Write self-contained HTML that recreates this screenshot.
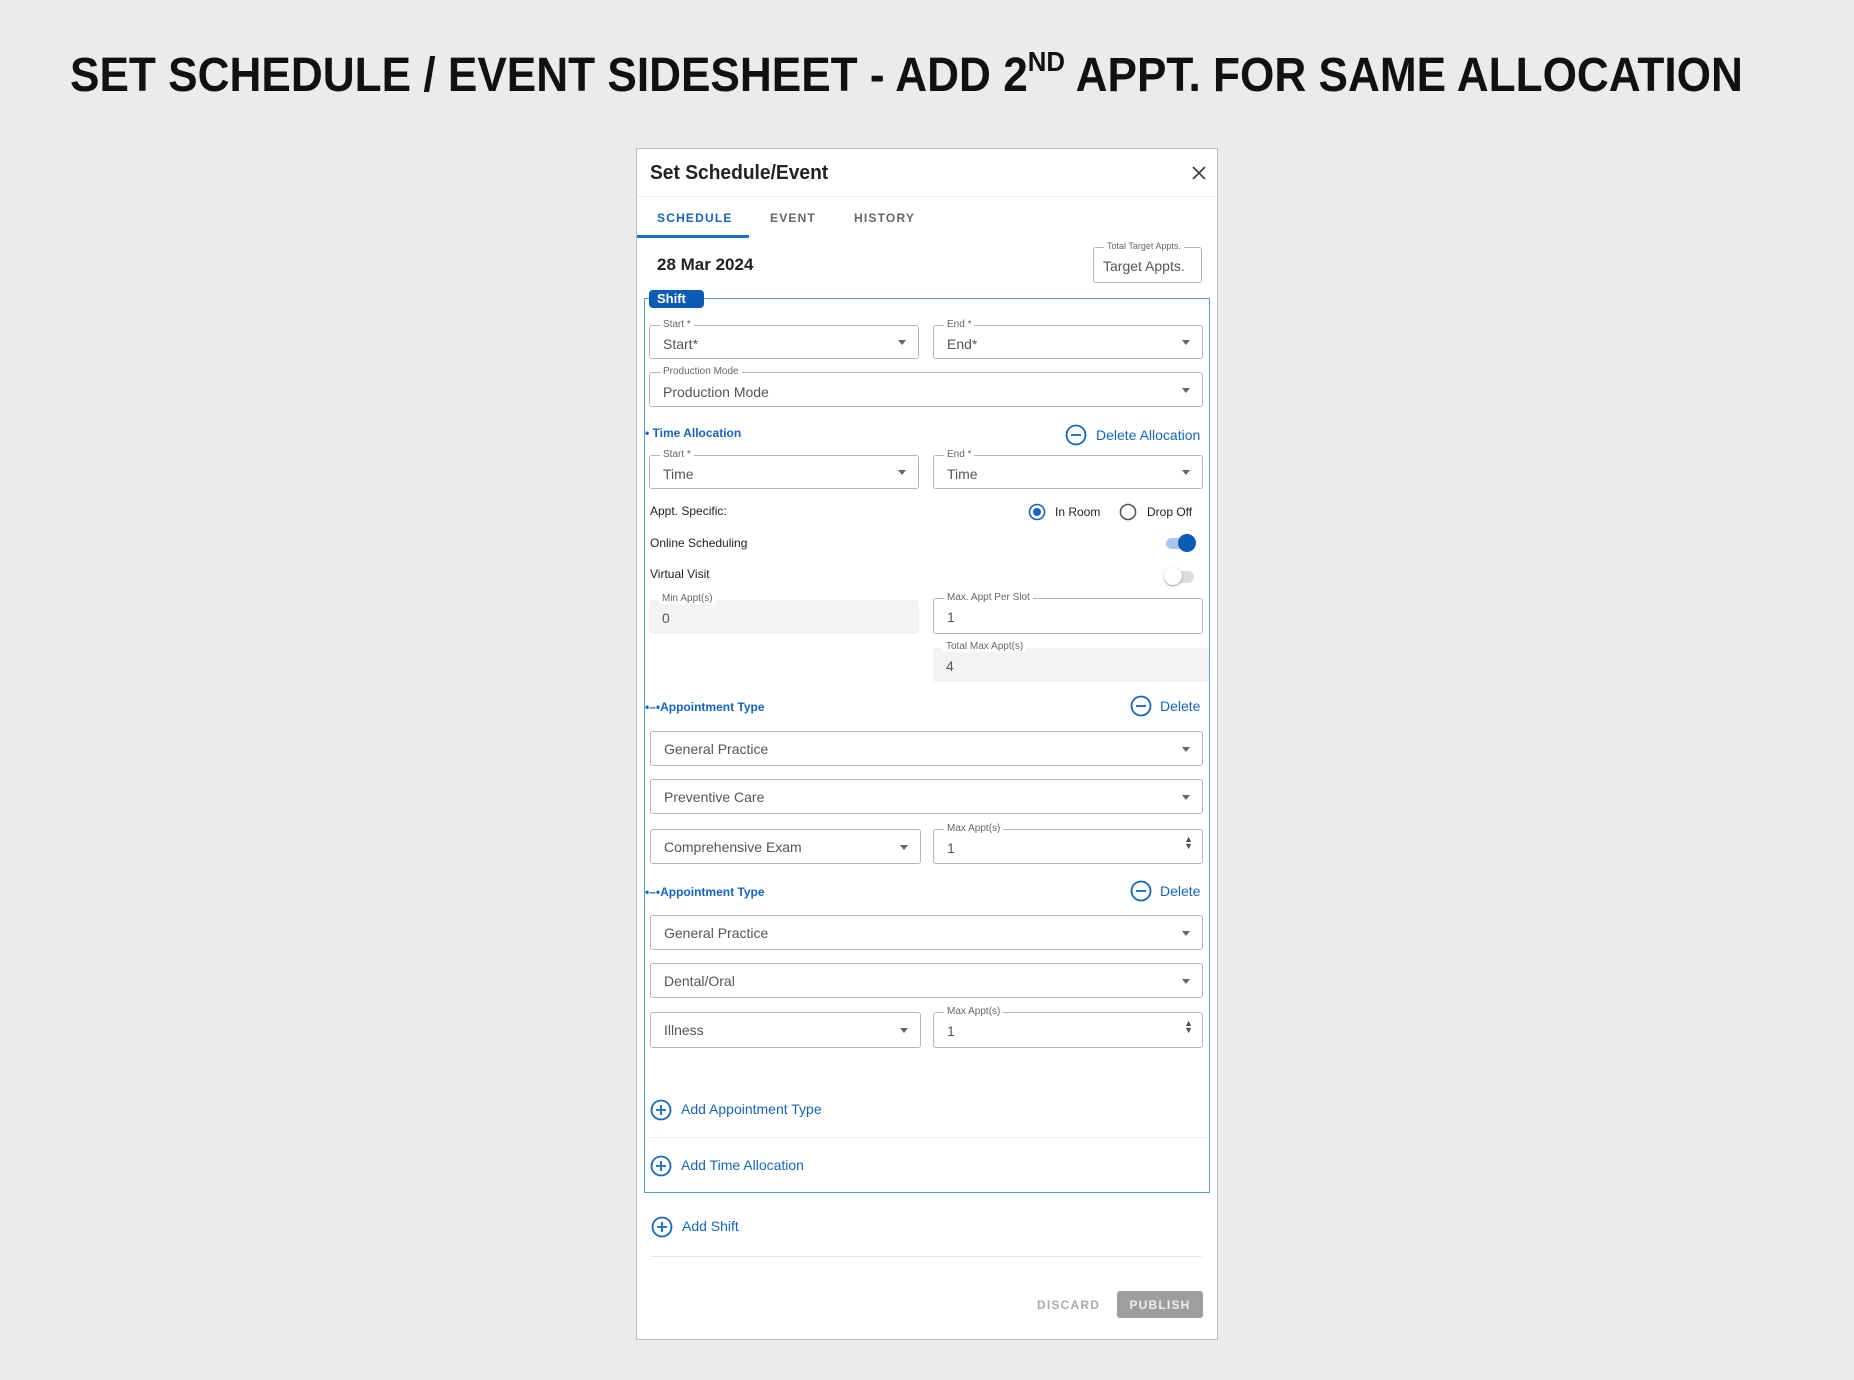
<!DOCTYPE html>
<html><head><meta charset="utf-8"><style>
*{box-sizing:border-box;margin:0;padding:0}
body{width:1854px;height:1380px;background:#ebebeb;font-family:"Liberation Sans",sans-serif;position:relative;overflow:hidden;color:#222}
.a{position:absolute}
h1{position:absolute;left:70px;top:48px;font-size:48px;font-weight:bold;color:#111;white-space:nowrap;transform-origin:0 0;transform:scaleX(0.92)}
h1 sup{font-size:28px;vertical-align:top;position:relative;top:-2px}
.panel{position:absolute;left:636px;top:148px;width:582px;height:1192px;background:#fff;border:1px solid #bdbdbd}
.f{position:absolute;border:1.5px solid #b5b5b5;border-radius:3px;background:#fff}
.f .l{position:absolute;left:10px;top:-7px;font-size:10px;color:#666;background:#fff;padding:0 3px}
.f .v{position:absolute;left:13px;top:50%;transform:translateY(-50%);font-size:14px;color:#555}
.f .c{position:absolute;right:12px;top:50%;margin-top:-2px;border-left:4px solid transparent;border-right:4px solid transparent;border-top:5px solid #666}
.g{background:#f3f3f3;border:none}
.g .l{background:#fff}
.blue{color:#1565c0}
.t{font-size:12px;color:#222}
.ic{position:absolute}
</style></head><body>
<h1>SET SCHEDULE / EVENT SIDESHEET - ADD 2<sup>ND</sup> APPT. FOR SAME ALLOCATION</h1>

<div class="panel"></div>
<div class="a" style="left:650px;top:162px;font-size:20px;font-weight:bold;color:#222;transform-origin:0 0;transform:scaleX(0.96)">Set Schedule/Event</div>
<svg class="ic" style="left:1191px;top:165px" width="16" height="16" viewBox="0 0 16 16"><path d="M2 2L14 14M14 2L2 14" stroke="#444" stroke-width="1.8"/></svg>
<div class="a" style="left:637px;top:196px;width:580px;height:1px;background:#eee"></div>
<div class="a" style="left:657px;top:211px;font-size:12px;font-weight:bold;letter-spacing:1.2px;color:#1565c0">SCHEDULE</div>
<div class="a" style="left:770px;top:211px;font-size:12px;font-weight:bold;letter-spacing:1.2px;color:#666">EVENT</div>
<div class="a" style="left:854px;top:211px;font-size:12px;font-weight:bold;letter-spacing:1.2px;color:#666">HISTORY</div>
<div class="a" style="left:637px;top:235px;width:112px;height:3px;background:#1e6fc4"></div>
<div class="a" style="left:657px;top:255px;font-size:17px;font-weight:bold;color:#222">28 Mar 2024</div>
<div class="f" style="left:1093px;top:247px;width:109px;height:36px"><span class="l" style="font-size:9px">Total Target Appts.</span><span class="v" style="left:9px;margin-top:1px">Target Appts.</span></div>

<div class="a" style="left:644px;top:298px;width:566px;height:895px;border:1.5px solid #5b9bd5"></div>
<div class="a" style="left:649px;top:290px;width:55px;height:18px;background:#0d5bb5;border-radius:4px;color:#fff;font-size:13px;font-weight:bold;padding:1px 0 0 8px">Shift</div>

<div class="f" style="left:649px;top:325px;width:270px;height:34px"><span class="l">Start *</span><span class="v" style="margin-top:2px">Start*</span><span class="c"></span></div>
<div class="f" style="left:933px;top:325px;width:270px;height:34px"><span class="l">End *</span><span class="v" style="margin-top:2px">End*</span><span class="c"></span></div>
<div class="f" style="left:649px;top:372px;width:554px;height:35px"><span class="l">Production Mode</span><span class="v" style="margin-top:2px">Production Mode</span><span class="c"></span></div>

<div class="a blue" style="left:645px;top:426px;font-size:12px;font-weight:bold">• Time Allocation</div>
<svg class="ic" style="left:1065px;top:424px" width="22" height="22" viewBox="0 0 22 22"><circle cx="11" cy="11" r="9.5" fill="none" stroke="#1565c0" stroke-width="1.8"/><path d="M6 11H16" stroke="#1565c0" stroke-width="1.8"/></svg>
<div class="a blue" style="left:1096px;top:427px;font-size:14px">Delete Allocation</div>
<div class="f" style="left:649px;top:455px;width:270px;height:34px"><span class="l">Start *</span><span class="v" style="margin-top:2px">Time</span><span class="c"></span></div>
<div class="f" style="left:933px;top:455px;width:270px;height:34px"><span class="l">End *</span><span class="v" style="margin-top:2px">Time</span><span class="c"></span></div>

<div class="a t" style="left:650px;top:504px">Appt. Specific:</div>
<svg class="ic" style="left:1028px;top:503px" width="18" height="18"><circle cx="9" cy="9" r="7.5" fill="none" stroke="#1565c0" stroke-width="1.6"/><circle cx="9" cy="9" r="4" fill="#1565c0"/></svg>
<div class="a t" style="left:1055px;top:505px">In Room</div>
<svg class="ic" style="left:1119px;top:503px" width="18" height="18"><circle cx="9" cy="9" r="7.5" fill="none" stroke="#555" stroke-width="1.6"/></svg>
<div class="a t" style="left:1147px;top:505px">Drop Off</div>
<div class="a t" style="left:650px;top:536px">Online Scheduling</div>
<div class="a" style="left:1166px;top:538px;width:24px;height:11px;border-radius:6px;background:#aac4f0"></div>
<div class="a" style="left:1178px;top:534px;width:18px;height:18px;border-radius:50%;background:#0d5bb5"></div>
<div class="a t" style="left:650px;top:567px">Virtual Visit</div>
<div class="a" style="left:1166px;top:571px;width:28px;height:12px;border-radius:6px;background:#ddd"></div>
<div class="a" style="left:1164px;top:567px;width:18px;height:18px;border-radius:50%;background:#fff;box-shadow:0 1px 2px rgba(0,0,0,.4)"></div>

<div class="f g" style="left:649px;top:600px;width:270px;height:34px"><span class="l" style="background:#fff">Min Appt(s)</span><span class="v" style="margin-top:1px">0</span></div>
<div class="f" style="left:933px;top:598px;width:270px;height:36px"><span class="l">Max. Appt Per Slot</span><span class="v" style="margin-top:1px">1</span></div>
<div class="f g" style="left:933px;top:648px;width:276px;height:34px"><span class="l" style="left:10px">Total Max Appt(s)</span><span class="v" style="margin-top:1px">4</span></div>

<div class="a blue" style="left:645px;top:700px;font-size:12px;font-weight:bold">•–•Appointment Type</div>
<svg class="ic" style="left:1130px;top:695px" width="22" height="22" viewBox="0 0 22 22"><circle cx="11" cy="11" r="9.5" fill="none" stroke="#1565c0" stroke-width="1.8"/><path d="M6 11H16" stroke="#1565c0" stroke-width="1.8"/></svg>
<div class="a blue" style="left:1160px;top:698px;font-size:14px">Delete</div>
<div class="f" style="left:650px;top:731px;width:553px;height:35px"><span class="v">General Practice</span><span class="c"></span></div>
<div class="f" style="left:650px;top:779px;width:553px;height:35px"><span class="v">Preventive Care</span><span class="c"></span></div>
<div class="f" style="left:650px;top:829px;width:271px;height:35px"><span class="v">Comprehensive Exam</span><span class="c"></span></div>
<div class="f" style="left:933px;top:829px;width:270px;height:35px"><span class="l">Max Appt(s)</span><span class="v" style="margin-top:1px">1</span><span class="a" style="right:9px;top:6px;font-size:9px;color:#555;line-height:7px">▲<br>▼</span></div>

<div class="a blue" style="left:645px;top:885px;font-size:12px;font-weight:bold">•–•Appointment Type</div>
<svg class="ic" style="left:1130px;top:880px" width="22" height="22" viewBox="0 0 22 22"><circle cx="11" cy="11" r="9.5" fill="none" stroke="#1565c0" stroke-width="1.8"/><path d="M6 11H16" stroke="#1565c0" stroke-width="1.8"/></svg>
<div class="a blue" style="left:1160px;top:883px;font-size:14px">Delete</div>
<div class="f" style="left:650px;top:915px;width:553px;height:35px"><span class="v">General Practice</span><span class="c"></span></div>
<div class="f" style="left:650px;top:963px;width:553px;height:35px"><span class="v">Dental/Oral</span><span class="c"></span></div>
<div class="f" style="left:650px;top:1012px;width:271px;height:36px"><span class="v">Illness</span><span class="c"></span></div>
<div class="f" style="left:933px;top:1012px;width:270px;height:36px"><span class="l">Max Appt(s)</span><span class="v" style="margin-top:1px">1</span><span class="a" style="right:9px;top:7px;font-size:9px;color:#555;line-height:7px">▲<br>▼</span></div>

<svg class="ic" style="left:650px;top:1099px" width="22" height="22" viewBox="0 0 22 22"><circle cx="11" cy="11" r="9.5" fill="none" stroke="#1565c0" stroke-width="1.8"/><path d="M6 11H16M11 6V16" stroke="#1565c0" stroke-width="1.8"/></svg>
<div class="a blue" style="left:681px;top:1101px;font-size:14px">Add Appointment Type</div>
<div class="a" style="left:650px;top:1137px;width:558px;height:1px;background:#eee"></div>
<svg class="ic" style="left:650px;top:1155px" width="22" height="22" viewBox="0 0 22 22"><circle cx="11" cy="11" r="9.5" fill="none" stroke="#1565c0" stroke-width="1.8"/><path d="M6 11H16M11 6V16" stroke="#1565c0" stroke-width="1.8"/></svg>
<div class="a blue" style="left:681px;top:1157px;font-size:14px">Add Time Allocation</div>

<svg class="ic" style="left:651px;top:1216px" width="22" height="22" viewBox="0 0 22 22"><circle cx="11" cy="11" r="9.5" fill="none" stroke="#1565c0" stroke-width="1.8"/><path d="M6 11H16M11 6V16" stroke="#1565c0" stroke-width="1.8"/></svg>
<div class="a blue" style="left:682px;top:1218px;font-size:14px">Add Shift</div>
<div class="a" style="left:650px;top:1256px;width:552px;height:1px;background:#e6e6e6"></div>
<div class="a" style="left:1037px;top:1298px;font-size:12px;font-weight:bold;letter-spacing:1.2px;color:#aaa">DISCARD</div>
<div class="a" style="left:1117px;top:1291px;width:86px;height:27px;background:#9e9e9e;border-radius:3px;color:#eee;font-size:12px;font-weight:bold;letter-spacing:1.2px;text-align:center;line-height:28px">PUBLISH</div>
</body></html>
